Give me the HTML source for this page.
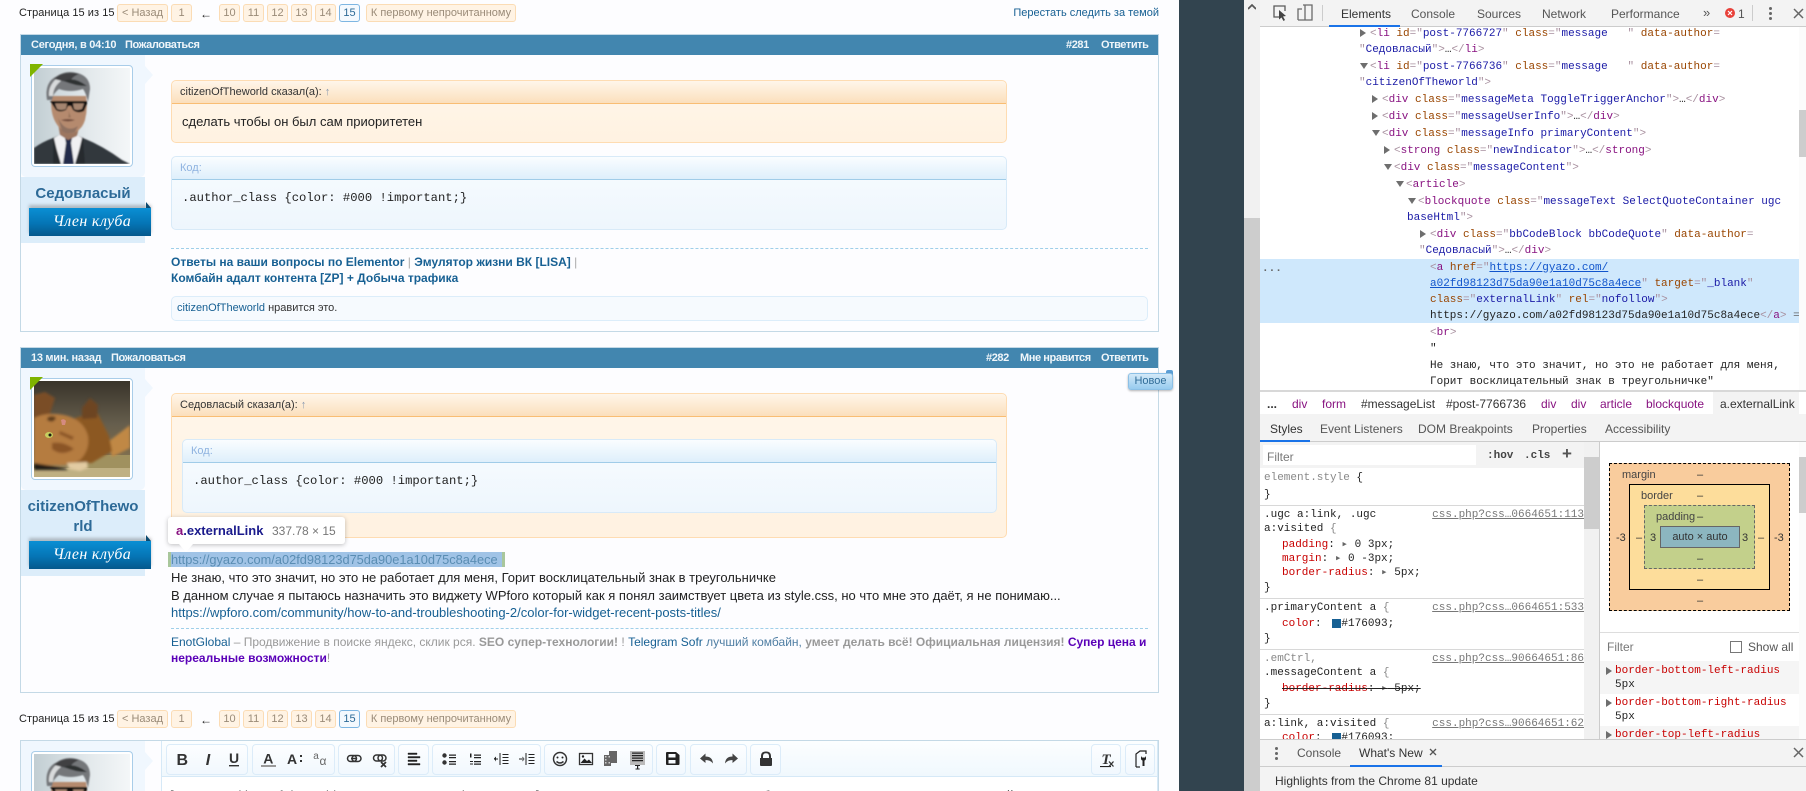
<!DOCTYPE html>
<html><head><meta charset="utf-8"><title>Forum</title>
<style>
html,body{margin:0;padding:0;width:1806px;height:791px;overflow:hidden;background:#fdfdff}
body{position:relative;font-family:"Liberation Sans","Noto Sans CJK SC",sans-serif;font-size:11px;color:#222}
#root{position:absolute;left:0;top:0;width:1806px;height:791px;overflow:hidden}
.a,.t{position:absolute}
.t{white-space:nowrap;line-height:16px}
.b{font-weight:bold}
.pb{position:absolute;top:4px;height:16px;border:1px solid #fbdcb5;border-radius:3px;background:#fff3e4;color:#9a8b78;font-size:11px;line-height:16px;text-align:center;box-sizing:content-box}
.post{position:absolute;left:20px;width:1137px;border:1px solid #c4d9e6;background:#fdfdff}
.head{position:absolute;left:0;right:0;top:0;height:20px;background:#4286af}
.head .t{color:#f0f6fa;font-weight:bold;top:2px;letter-spacing:-.42px}
.pan{position:absolute;left:21px;width:124px;background:#f0f7fe;border-radius:0 0 5px 5px}
.pan2{position:absolute;left:21px;width:124px;background:#dcedfa}
.arr{position:absolute;left:145px;width:0;height:0;border:9px solid transparent;border-left:8px solid #f0f7fe;border-right:0}
.av{position:absolute;left:31px;width:100px;height:100px;border:1px solid #a9cde9;border-radius:4px;background:#fff}
.av svg{position:absolute;left:2px;top:2px;width:96px;height:96px}
.gr{position:absolute;left:30px;width:0;height:0;border-top:13px solid #7fb400;border-right:13px solid transparent}
.name{position:absolute;left:21px;width:124px;text-align:center;font-size:15px;font-weight:bold;color:#2d6a97;line-height:20px}
.rib{position:absolute;left:29px;width:122px;height:28px;background:linear-gradient(#0a8fd4,#0575b5 55%,#05588c);color:#fff;font-family:"Liberation Serif",serif;font-style:italic;font-size:16px;letter-spacing:.3px;text-indent:4px;text-align:center;line-height:27px;box-shadow:0 -3px 3px rgba(90,90,90,.35)}
.rib:before{content:"";position:absolute;right:0;top:-6px;border-bottom:6px solid #0a4a70;border-right:5px solid transparent}
.q{position:absolute;left:171px;width:836px;border:1px solid #fedcb2;border-radius:5px;background:linear-gradient(#fff6ea,#fff2e1);box-sizing:border-box}
.qh{position:absolute;left:0;right:0;top:0;height:22px;background:linear-gradient(#fff6ea,#fbdfbc);border-bottom:1px solid #f9bd73;border-radius:5px 5px 0 0}
.c{position:absolute;border:1px solid #d8eaf8;border-radius:5px;background:linear-gradient(#f8fcfe,#eef6fd);box-sizing:border-box}
.ch{position:absolute;left:0;right:0;top:0;height:22px;background:linear-gradient(#fafdff,#deeffb);border-bottom:1px solid #a0cce8;border-radius:5px 5px 0 0}
.mono13{font-family:"Liberation Mono",monospace;font-size:12.2px;color:#222}
.dash{position:absolute;left:171px;width:977px;border-top:1px dashed #9fcfe9;height:0}
.m{font-size:12px;font-weight:bold;color:#176093}
.x{font-size:13px;color:#222}
.g{position:absolute;top:744px;height:29px;border:1px solid #dcecf9;border-radius:4px;background:linear-gradient(#fdfeff,#f1f8fe);box-sizing:content-box}
.ic{font-family:"Liberation Sans",sans-serif;fill:#333}
/* devtools */
#dv{position:absolute;left:1260px;top:0;width:546px;height:791px;background:#fff;overflow:hidden}
#dv .t{position:absolute}
.d{font-family:"Liberation Mono",monospace;font-size:11px;color:#222;white-space:pre !important;margin-top:1px}
.s{font-family:"Liberation Sans",sans-serif;font-size:12px;color:#555}
.tg{color:#881280}.br{color:#a8909f}.an{color:#994500}.av2{color:#1a1aa6}
.r{width:0;height:0;position:absolute;border-left:6px solid #6e6e6e;border-top:4px solid transparent;border-bottom:4px solid transparent}
.dn{width:0;height:0;position:absolute;border-top:6px solid #6e6e6e;border-left:4px solid transparent;border-right:4px solid transparent}
.sep{position:absolute;left:0;width:324px;height:1px;background:#d8d8d8}
.red{color:#c80000}.grn{color:#444}
.link{position:absolute;right:0;color:#777;text-decoration:underline}
</style></head>
<body>
<div id="root">

<!-- avatar art -->
<svg width="0" height="0" style="position:absolute">
  <defs>
    <linearGradient id="mbg" x1="0" x2="1" y1="0" y2="0"><stop offset="0" stop-color="#c2ced3"/><stop offset=".55" stop-color="#e2e8eb"/><stop offset="1" stop-color="#f4f7f8"/></linearGradient>
    <linearGradient id="cbg" x1="0" x2="0" y1="0" y2="1"><stop offset="0" stop-color="#39342a"/><stop offset=".45" stop-color="#665e4d"/><stop offset=".75" stop-color="#7c6c4e"/><stop offset="1" stop-color="#a89a6c"/></linearGradient>
    <filter id="bl"><feGaussianBlur stdDeviation=".9"/></filter>
    <filter id="bl2"><feGaussianBlur stdDeviation="1.200"/></filter>
    <g id="man">
      <rect width="96" height="96" fill="url(#mbg)"/>
      <g filter="url(#bl)">
        <path d="M0 96V80q8-6 19-10l8-4h14l8 4q20 8 39 22l8 4z" fill="#33373c"/>
        <path d="M20 70l10-6h9l9 6-6 26H26z" fill="#f0f0f2"/>
        <path d="M31 70h7l-1 5 3 21H29l3-21z" fill="#232b48"/>
        <path d="M19 69l8 27h-8zM49 69l-8 27h10z" fill="#26292e"/>
        <path d="M24 55l2 12 8 5 9-4 3-13z" fill="#9c7660"/>
        <path d="M18 28q-3 18 6 30 7 9 15 7 9-3 12-13 3-12 1-24z" fill="#b58a6e"/>
        <path d="M24 50q8 16 20 8l-3 6q-7 3-13-1z" fill="#8f7160"/>
        <path d="M13 32Q10 14 23 8q9-6 20-3 13 3 13 16l-2 13q-2-9-5-13-13 4-24 0-6 4-7 11z" fill="#74777a"/>
        <path d="M15 28q-1-10 8-18l4 3q-8 6-8 15z" fill="#d8dadb"/>
        <path d="M20 11Q30 2 45 6q-8 3-9 9-7-2-16-4z" fill="#3f4143"/>
        <path d="M30 13q10-5 23 5-12 0-23-5z" fill="#2f3133"/>
        <path d="M16 33h37v3l-3 7q-6 3-11-1l-2-4h-3l-2 4q-6 3-10 0z" fill="#0e0f10"/>
        <path d="M21 35.500h12l-1 5.500q-5 2-9 0zM39 35.500h11l-2 5.500q-5 2-8 0z" fill="#a58570"/>
        <path d="M27 52q7-2 14 0-7 3-14 0z" fill="#744f40"/>
        <path d="M33 40q3 6 1 9 2 1 3 0z" fill="#97735a"/>
      </g>
    </g>
    <g id="cat">
      <rect width="96" height="96" fill="url(#cbg)"/>
      <rect y="74" x="40" width="56" height="22" fill="#a0915f"/>
      <rect y="87" width="96" height="9" fill="#bfb083"/>
      <g filter="url(#bl2)">
        <path d="M74 61L96 44v23L78 76z" fill="#c08845"/>
        <path d="M41 37l22-6 12 24 3 15-20 12H40z" fill="#8c5823"/>
        <path d="M48 38V27l8-10 8 7-1 13z" fill="#6d4524"/>
        <path d="M0 14l11-3 10 6-7 22L0 46z" fill="#7a4e28"/>
        <path d="M0 37q14-7 34-2 16 5 20 20 2 14-8 24-10 6-24 5L0 84z" fill="#b57c40"/>
        <path d="M14 36q6-2 8 1-3 6-9 2z" fill="#5e3c1e"/>
        <path d="M18 62q12-2 22 6-12 8-22 0zM26 50l14 6-2 3-13-6z" fill="#8b5526"/>
        <path d="M0 82l30 5 5 2H0z" fill="#231b12"/>
        <path d="M33 82l20-1 1 6-8 3-11-2z" fill="#e2cba2"/>
      </g>
      <path d="M27 39q3-2 5 1l-1 4-3 0z" fill="#d58b80"/>
      <ellipse cx="15" cy="54" rx="4" ry="3" fill="#c6cf60"/>
      <circle cx="16" cy="54" r="1.500" fill="#1c1c10"/>
    </g>
  </defs>
</svg>

<!-- top pager -->
<div class="t" style="left:19px;top:5px;font-size:11px;color:#222;letter-spacing:.05px">Страница 15 из 15</div>
<div class="pb" style="left:117px;width:49px">&lt; Назад</div>
<div class="pb" style="left:171px;width:19px">1</div>
<div class="t" style="left:200px;top:6px;font-size:12px;color:#222">←</div>
<div class="pb" style="left:219px;width:19px">10</div>
<div class="pb" style="left:243px;width:19px">11</div>
<div class="pb" style="left:267px;width:19px">12</div>
<div class="pb" style="left:291px;width:19px">13</div>
<div class="pb" style="left:315px;width:19px">14</div>
<div class="pb" style="left:339px;width:19px;border-color:#7eb6e2;background:#f4f9fe;color:#2d6a97">15</div>
<div class="pb" style="left:366px;width:148px">К первому непрочитанному</div>
<div class="t" style="left:1009px;top:5px;width:150px;text-align:right;color:#176093;font-size:11px">Перестать следить за темой</div>

<!-- post 1 -->
<div class="post" style="top:34px;height:296px">
  <div class="head">
    <div class="t" style="left:10px;letter-spacing:-.25px">Сегодня, в 04:10</div>
    <div class="t" style="left:104px">Пожаловаться</div>
    <div class="t" style="left:1045px">#281</div>
    <div class="t" style="left:1080px">Ответить</div>
  </div>
</div>
<div class="pan" style="top:55px;height:122px"></div>
<div class="pan2" style="top:177px;height:66px"></div>
<div class="arr" style="top:66px"></div>
<div class="av" style="top:65px"><svg viewBox="0 0 96 96"><use href="#man"/></svg></div>
<div class="gr" style="top:64px"></div>
<div class="name" style="top:184px">Седовласый</div>
<div class="rib" style="top:208px">Член клуба</div>

<div class="q" style="top:80px;height:63px">
  <div class="qh"></div>
  <div class="t" style="left:8px;top:3px;color:#333;font-size:11px">citizenOfTheworld сказал(а): <span style="color:#8a9ab0">↑</span></div>
  <div class="t" style="left:10px;top:33px;font-size:13px;color:#222">сделать чтобы он был сам приоритетен</div>
</div>
<div class="c" style="left:171px;top:156px;width:836px;height:74px">
  <div class="ch"></div>
  <div class="t" style="left:8px;top:3px;color:#8fb3e0;font-size:11px">Код:</div>
  <div class="t mono13" style="left:10px;top:33px">.author_class {color: #000 !important;}</div>
</div>
<div class="dash" style="top:248px"></div>
<div class="t m" style="left:171px;top:254px">Ответы на ваши вопросы по Elementor <span style="color:#aaa;font-weight:normal">|</span> Эмулятор жизни ВК [LISA] <span style="color:#aaa;font-weight:normal">|</span></div>
<div class="t m" style="left:171px;top:270px">Комбайн адалт контента [ZP] + Добыча трафика</div>
<div class="a" style="left:171px;top:296px;width:977px;height:25px;box-sizing:border-box;background:#f6fafe;border:1px solid #dcedfa;border-radius:5px"></div>
<div class="t" style="left:177px;top:300px;font-size:11px;color:#333"><span style="color:#176093">citizenOfTheworld</span> нравится это.</div>

<!-- post 2 -->
<div class="post" style="top:347px;height:344px">
  <div class="head">
    <div class="t" style="left:10px;letter-spacing:-.3px">13 мин. назад</div>
    <div class="t" style="left:90px">Пожаловаться</div>
    <div class="t" style="left:965px">#282</div>
    <div class="t" style="left:999px">Мне нравится</div>
    <div class="t" style="left:1080px">Ответить</div>
  </div>
</div>
<div class="pan" style="top:368px;height:122px"></div>
<div class="pan2" style="top:490px;height:86px"></div>
<div class="arr" style="top:379px"></div>
<div class="av" style="top:378px"><svg viewBox="0 0 96 96"><use href="#cat"/></svg></div>
<div class="gr" style="top:377px"></div>
<div class="name" style="top:497px">citizenOfThewo<br>rld</div>
<div class="rib" style="top:541px">Член клуба</div>

<div class="q" style="top:393px;height:145px">
  <div class="qh"></div>
  <div class="t" style="left:8px;top:3px;color:#333;font-size:11px">Седовласый сказал(а): <span style="color:#8a9ab0">↑</span></div>
</div>
<div class="c" style="left:182px;top:439px;width:815px;height:74px">
  <div class="ch"></div>
  <div class="t" style="left:8px;top:3px;color:#8fb3e0;font-size:11px">Код:</div>
  <div class="t mono13" style="left:10px;top:33px">.author_class {color: #000 !important;}</div>
</div>

<div class="a" style="left:168px;top:552px;width:337px;height:15px;background:#a9c79c"></div>
<div class="a" style="left:171px;top:552px;width:331px;height:15px;background:#a0c3e6"></div>
<div class="t" style="left:171px;top:552px;font-size:12.8px;line-height:15px;color:#5a8db3">https://gyazo.com/a02fd98123d75da90e1a10d75c8a4ece</div>
<div class="t x" style="left:171px;top:570px">Не знаю, что это значит, но это не работает для меня, Горит восклицательный знак в треугольничке</div>
<div class="t x" style="left:171px;top:588px">В данном случае я пытаюсь назначить это виджету WPforo который как я понял заимствует цвета из style.css, но что мне это даёт, я не понимаю...</div>
<div class="t x" style="left:171px;top:605px;color:#176093">https://wpforo.com/community/how-to-and-troubleshooting-2/color-for-widget-recent-posts-titles/</div>
<div class="dash" style="top:628px"></div>
<div class="t" style="left:171px;top:634px;font-size:12px;color:#999"><span style="color:#176093">EnotGlobal</span> – Продвижение в поиске яндекс, склик рся. <b>SEO супер-технологии!</b> ! <span style="color:#176093">Telegram Sofr</span> <span style="color:#4f7ea3">лучший комбайн,</span> <b>умеет делать всё! Официальная лицензия!</b> <b style="color:#5a00b8">Супер цена и</b></div>
<div class="t" style="left:171px;top:650px;font-size:12px;color:#999"><b style="color:#5a00b8">нереальные возможности</b>!</div>

<!-- "Новое" badge -->
<div class="a" style="left:1166px;top:370px;width:7px;height:6px;background:#5c9fd6;border-radius:2px 2px 0 0"></div>
<div class="a" style="left:1128px;top:373px;width:45px;height:17px;box-sizing:border-box;background:linear-gradient(#d3e9f8,#97cbef);border:1px solid #8cc0e6;border-radius:3px;box-shadow:0 1px 2px rgba(0,0,0,.3);color:#2f6c98;text-align:center;font-size:11px;line-height:15px">Новое</div>

<!-- tooltip -->
<div class="a" style="left:168px;top:517px;width:177px;height:27px;background:#fff;border-radius:3px;box-shadow:0 1px 5px rgba(0,0,0,.25)"></div>
<div class="a" style="left:179px;top:544px;width:0;height:0;border-top:8px solid #fff;border-left:7px solid transparent;border-right:7px solid transparent"></div>
<div class="t" style="left:176px;top:523px;font-size:13px;font-weight:bold;color:#1a1a8c"><span style="color:#881280">a</span>.externalLink</div>
<div class="t" style="left:272px;top:523px;font-size:12px;color:#777">337.78 × 15</div>

<!-- bottom pager -->
<div class="t" style="left:19px;top:711px;font-size:11px;color:#222;letter-spacing:.05px">Страница 15 из 15</div>
<div class="pb" style="left:117px;top:710px;width:49px">&lt; Назад</div>
<div class="pb" style="left:171px;top:710px;width:19px">1</div>
<div class="t" style="left:200px;top:712px;font-size:12px;color:#222">←</div>
<div class="pb" style="left:219px;top:710px;width:19px">10</div>
<div class="pb" style="left:243px;top:710px;width:19px">11</div>
<div class="pb" style="left:267px;top:710px;width:19px">12</div>
<div class="pb" style="left:291px;top:710px;width:19px">13</div>
<div class="pb" style="left:315px;top:710px;width:19px">14</div>
<div class="pb" style="left:339px;top:710px;width:19px;border-color:#7eb6e2;background:#f4f9fe;color:#2d6a97">15</div>
<div class="pb" style="left:366px;top:710px;width:148px">К первому непрочитанному</div>

<!-- editor -->
<div class="a" style="left:20px;top:740px;width:1139px;height:51px;box-sizing:border-box;border:1px solid #c4d9e6;border-bottom:0;background:#fdfdff"></div>
<div class="pan" style="top:741px;height:50px;border-radius:0"></div>
<div class="arr" style="top:752px"></div>
<div class="av" style="top:751px;height:39px;border-bottom:0;border-radius:4px 4px 0 0;overflow:hidden"><svg viewBox="0 0 96 37" style="height:37px"><use href="#man"/></svg></div>
<div class="a" style="left:161px;top:741px;width:997px;height:36px;box-sizing:border-box;background:linear-gradient(#fcfeff,#f0f8fd);border-bottom:1px solid #d6e9f7;border-left:1px solid #d6e9f7;border-right:1px solid #d6e9f7"></div>
<div class="a" style="left:161px;top:777px;width:997px;height:14px;background:#fff;border-left:1px solid #d6e9f7;border-right:1px solid #d6e9f7;box-sizing:border-box"></div>
<div class="t" style="left:170px;top:788px;height:3px;width:980px;overflow:hidden;font-size:13px;color:#222">[QUOTE="citizenOfTheworld, post: 7766736, member: 278838"]Не знаю, что это значит, но это не работает для меня, Горит восклицательный знак в треугольничке</div>

<div class="g" style="left:166px;width:80px"></div>
<div class="g" style="left:252px;width:81px"></div>
<div class="g" style="left:338px;width:55px"></div>
<div class="g" style="left:398px;width:29px"></div>
<div class="g" style="left:432px;width:107px"></div>
<div class="g" style="left:544px;width:107px"></div>
<div class="g" style="left:656px;width:28px"></div>
<div class="g" style="left:690px;width:55px"></div>
<div class="g" style="left:750px;width:29px"></div>
<div class="g" style="left:1091px;width:28px"></div>
<div class="g" style="left:1125px;width:28px"></div>

<svg class="a" style="left:0;top:738px" width="1180" height="53" viewBox="0 738 1180 53">
  <g class="ic">
    <text x="182.3" y="765" text-anchor="middle" font-size="16" font-weight="bold">B</text>
    <text x="208" y="765" text-anchor="middle" font-size="16" font-weight="bold" font-style="italic">I</text>
    <text x="234" y="763" text-anchor="middle" font-size="14" font-weight="bold">U</text>
    <rect x="229" y="765" width="10" height="1.4"/>
    <text x="268.3" y="763.5" text-anchor="middle" font-size="14" font-weight="bold">A</text>
    <rect x="261" y="765" width="15" height="2" fill="#999"/>
    <text x="292" y="764" text-anchor="middle" font-size="14" font-weight="bold">A</text>
    <path d="M300 755h2v2h-2zM300 760h2v2h-2z"/>
    <text x="316" y="759" text-anchor="middle" font-size="10" fill="#666">a</text>
    <text x="323" y="765" text-anchor="middle" font-size="12" fill="#666">α</text>
  </g>
  <g fill="none" stroke="#333" stroke-width="1.5">
    <rect x="347.5" y="755.5" width="9" height="6" rx="3"/><rect x="352" y="755.5" width="9" height="6" rx="3"/>
    <path d="M351 758.5h6"/>
    <rect x="373.5" y="755" width="9" height="6" rx="3"/><rect x="378" y="755" width="8" height="6" rx="3"/>
    <path d="M381 762l5 5M386 762l-5 5" stroke-width="1.7"/>
    <circle cx="560" cy="759" r="6.5"/>
    <path d="M556.5 761.5q3.5 3 7 0"/>
    <rect x="579.5" y="753.5" width="13" height="11" stroke-width="1.3"/>
  </g>
  <g fill="#222">
    <path d="M408 753h9v1.5h-9zM408 756.5h12v1.5h-12zM408 760h9v1.5h-9zM408 763.5h12v1.5h-12z" stroke="#222" stroke-width=".4"/>
    <circle cx="444.5" cy="755.5" r="2.2" fill="#333"/><circle cx="444.5" cy="762.5" r="2.2" fill="#333"/>
    <path d="M449 754.5h7v1.3h-7zM449 757h7v1.3h-7zM449 761h7v1.3h-7zM449 763.5h7v1.3h-7z"/>
    <path d="M470 753.5h1.5v4H470zM474 754.5h7v1.3h-7zM474 757h7v1.3h-7zM470 761h3v1h-3v1.5h3v1h-3zM474 761h7v1.3h-7zM474 763.5h7v1.3h-7z"/>
    <path d="M499.5 753h1v12h-1zM502.5 754h6v1h-6zM502.5 757h6v1h-6zM502.5 760h6v1h-6zM502.5 763h6v1h-6zM494 758.5h4v1h-4zM494 758.5l2-2v5z"/>
    <path d="M525.500 753h1v12h-1zM528.500 754h6v1h-6zM528.500 757h6v1h-6zM528.500 760h6v1h-6zM528.500 763h6v1h-6zM519 758.500h4.500v1H519zM524.500 759l-2-2.500v5z"/>
    <circle cx="557.500" cy="757.500" r="1"/><circle cx="562.500" cy="757.500" r="1"/>
    <path d="M580.500 763l4-4.500 2.500 2.500 2-1.500 3 3.500z"/>
    <circle cx="583" cy="756.500" r="1.200"/>
    <path d="M604 755h7v11h-7zM609 751h8v12h-6v-8h-2z" fill="#666"/>
    <path d="M605 756h1.500v1.500H605zM605 759h1.500v1.500H605zM605 762h1.500v1.500H605zM608.500 756h1.500v1.500h-1.500zM608.500 762h1.500v1.500h-1.500z" fill="#ccc"/>
    <rect x="630" y="751" width="15" height="14" fill="#bbb"/>
    <path d="M632 752.500h11v1.200h-11zM632 755h11v1.200h-11zM632 757.500h11v1.200h-11zM632 760h11v1.200h-11zM635 765h5v1h-5zM637 765h1.200v4H637zM635.500 768.500h4.200v1h-4.200z"/>
    <path fill-rule="evenodd" d="M667 752h9l3.500 3v9q0 1-1 1h-11.500q-1 0-1-1v-11q0-1 1-1zM668.500 754v3.500h7V754zM668.500 760v3.500h7V760z"/>
    <path d="M700 758.500l5.500-5v3q7 0 7.500 7-2.500-3.500-7.500-3.500v3zM738 758.500l-5.500-5v3q-7 0-7.500 7 2.500-3.500 7.500-3.500v3z" fill="#444"/>
    <path fill-rule="evenodd" d="M761 758v-2q0-4.500 5-4.500t5 4.500v2h1v7q0 1-1 1h-10q-1 0-1-1v-7zM763 758h6v-2q0-2.800-3-2.800t-3 2.800z" fill="#333"/>
    <text x="1106" y="764" text-anchor="middle" font-size="15" font-weight="bold" font-style="italic" font-family="Liberation Serif" fill="#333">T</text>
    <rect x="1100" y="766" width="11" height="1.100"/>
    <path d="M1109 761.500l4.500 5M1113.500 761.500l-4.500 5" stroke="#333" stroke-width="1.300"/>
    <path d="M1136 767v-13l4-3h6v3" fill="none" stroke="#222" stroke-width="1.200"/>
    <path d="M1136 767h4" stroke="#222" stroke-width="1.200"/>
    <path d="M1141 756v2.500q0 1.500 1.500 2v5.500h2v-5.500q1.500-.5 1.500-2V756l-1 1.500h-3z"/>
  </g>
</svg>

<!-- dark strip + page scrollbar -->
<div class="a" style="left:1179px;top:0;width:65px;height:791px;background:#32444f"></div>
<div class="a" style="left:1244px;top:0;width:16px;height:791px;background:#f1f1f1"></div>
<div class="a" style="left:1244px;top:218px;width:16px;height:573px;background:#cdcdcd"></div>
<svg class="a" style="left:1248px;top:4px" width="8" height="6"><path d="M0 5l4-4 4 4" fill="none" stroke="#555" stroke-width="1.700"/></svg>

<!-- devtools -->
<div id="dv">
  <div class="a" style="left:0;top:0;width:546px;height:26px;background:#f3f3f3;border-bottom:1px solid #ccc"></div>
  <svg class="a" style="left:0;top:0" width="70" height="26">
    <path d="M19 17h-5v-11h11v5" fill="none" stroke="#5a5a5a" stroke-width="1.300"/>
    <path d="M19 10l7 6-3 .5 2 3.500-1.500 1-2-3.500-2.500 2z" fill="#444"/>
    <path d="M38 20v-11h4M43 5h9v15h-14M45 5v15" fill="none" stroke="#6a6a6a" stroke-width="1.300"/>
  </svg>
  <div class="a" style="left:62px;top:5px;width:1px;height:16px;background:#ccc"></div>
  <div class="t s" style="left:81px;top:6px;color:#333">Elements</div>
  <div class="a" style="left:69px;top:25px;width:71px;height:2px;background:#1a73e8"></div>
  <div class="t s" style="left:151px;top:6px">Console</div>
  <div class="t s" style="left:217px;top:6px">Sources</div>
  <div class="t s" style="left:282px;top:6px">Network</div>
  <div class="t s" style="left:351px;top:6px">Performance</div>
  <div class="t s" style="left:443px;top:5px;font-size:13px">»</div>
  <div class="a" style="left:465px;top:8px;width:10px;height:10px;border-radius:50%;background:#e8413a"></div>
  <svg class="a" style="left:465px;top:8px" width="10" height="10"><path d="M3 3l4 4M7 3l-4 4" stroke="#fff" stroke-width="1.200"/></svg>
  <div class="t s" style="left:478px;top:6px">1</div>
  <div class="a" style="left:492px;top:5px;width:1px;height:16px;background:#ccc"></div>
  <div class="a" style="left:509px;top:7px;width:3px;height:3px;background:#666;box-shadow:0 5px 0 #666,0 10px 0 #666;border-radius:50%"></div>
  <svg class="a" style="left:533px;top:8px" width="11" height="11"><path d="M1 1l9 9M10 1l-9 9" stroke="#666" stroke-width="1.500"/></svg>

  <!-- DOM tree -->
  <div class="a" style="left:0;top:259px;width:539px;height:64px;background:#cfe8fc"></div>
  <div class="t d" style="left:2px;top:260px;color:#666;font-weight:bold">...</div>
  <i class="r" style="left:100px;top:29px"></i>
  <div class="t d" style="left:110px;top:25px"><span class="br">&lt;</span><span class="tg">li</span> <span class="an">id</span><span class="br">="</span><span class="av2">post-7766727</span><span class="br">"</span> <span class="an">class</span><span class="br">="</span><span class="av2">message   </span><span class="br">"</span> <span class="an">data-author</span><span class="br">=</span></div>
  <div class="t d" style="left:99px;top:41px"><span class="br">"</span><span class="av2">Седовласый</span><span class="br">"&gt;</span>…<span class="br">&lt;/</span><span class="tg">li</span><span class="br">&gt;</span></div>
  <i class="dn" style="left:100px;top:63px"></i>
  <div class="t d" style="left:110px;top:58px"><span class="br">&lt;</span><span class="tg">li</span> <span class="an">id</span><span class="br">="</span><span class="av2">post-7766736</span><span class="br">"</span> <span class="an">class</span><span class="br">="</span><span class="av2">message   </span><span class="br">"</span> <span class="an">data-author</span><span class="br">=</span></div>
  <div class="t d" style="left:99px;top:74px"><span class="br">"</span><span class="av2">citizenOfTheworld</span><span class="br">"&gt;</span></div>
  <i class="r" style="left:112px;top:95px"></i>
  <div class="t d" style="left:122px;top:91px"><span class="br">&lt;</span><span class="tg">div</span> <span class="an">class</span><span class="br">="</span><span class="av2">messageMeta ToggleTriggerAnchor</span><span class="br">"&gt;</span>…<span class="br">&lt;/</span><span class="tg">div</span><span class="br">&gt;</span></div>
  <i class="r" style="left:112px;top:112px"></i>
  <div class="t d" style="left:122px;top:108px"><span class="br">&lt;</span><span class="tg">div</span> <span class="an">class</span><span class="br">="</span><span class="av2">messageUserInfo</span><span class="br">"&gt;</span>…<span class="br">&lt;/</span><span class="tg">div</span><span class="br">&gt;</span></div>
  <i class="dn" style="left:112px;top:130px"></i>
  <div class="t d" style="left:122px;top:125px"><span class="br">&lt;</span><span class="tg">div</span> <span class="an">class</span><span class="br">="</span><span class="av2">messageInfo primaryContent</span><span class="br">"&gt;</span></div>
  <i class="r" style="left:124px;top:146px"></i>
  <div class="t d" style="left:134px;top:142px"><span class="br">&lt;</span><span class="tg">strong</span> <span class="an">class</span><span class="br">="</span><span class="av2">newIndicator</span><span class="br">"&gt;</span>…<span class="br">&lt;/</span><span class="tg">strong</span><span class="br">&gt;</span></div>
  <i class="dn" style="left:124px;top:164px"></i>
  <div class="t d" style="left:134px;top:159px"><span class="br">&lt;</span><span class="tg">div</span> <span class="an">class</span><span class="br">="</span><span class="av2">messageContent</span><span class="br">"&gt;</span></div>
  <i class="dn" style="left:136px;top:181px"></i>
  <div class="t d" style="left:146px;top:176px"><span class="br">&lt;</span><span class="tg">article</span><span class="br">&gt;</span></div>
  <i class="dn" style="left:148px;top:198px"></i>
  <div class="t d" style="left:158px;top:193px"><span class="br">&lt;</span><span class="tg">blockquote</span> <span class="an">class</span><span class="br">="</span><span class="av2">messageText SelectQuoteContainer ugc</span></div>
  <div class="t d" style="left:147px;top:209px"><span class="av2">baseHtml</span><span class="br">"&gt;</span></div>
  <i class="r" style="left:160px;top:230px"></i>
  <div class="t d" style="left:170px;top:226px"><span class="br">&lt;</span><span class="tg">div</span> <span class="an">class</span><span class="br">="</span><span class="av2">bbCodeBlock bbCodeQuote</span><span class="br">"</span> <span class="an">data-author</span><span class="br">=</span></div>
  <div class="t d" style="left:159px;top:242px"><span class="br">"</span><span class="av2">Седовласый</span><span class="br">"&gt;</span>…<span class="br">&lt;/</span><span class="tg">div</span><span class="br">&gt;</span></div>
  <div class="t d" style="left:170px;top:259px"><span class="br">&lt;</span><span class="tg">a</span> <span class="an">href</span><span class="br">="</span><span style="color:#1155cc;text-decoration:underline">https://gyazo.com/</span></div>
  <div class="t d" style="left:170px;top:275px"><span style="color:#1155cc;text-decoration:underline">a02fd98123d75da90e1a10d75c8a4ece</span><span class="br">"</span> <span class="an">target</span><span class="br">="</span><span class="av2">_blank</span><span class="br">"</span></div>
  <div class="t d" style="left:170px;top:291px"><span class="an">class</span><span class="br">="</span><span class="av2">externalLink</span><span class="br">"</span> <span class="an">rel</span><span class="br">="</span><span class="av2">nofollow</span><span class="br">"&gt;</span></div>
  <div class="t d" style="left:170px;top:307px">https://gyazo.com/a02fd98123d75da90e1a10d75c8a4ece<span class="br">&lt;/</span><span class="tg">a</span><span class="br">&gt;</span> <span style="color:#666">=</span></div>
  <div class="t d" style="left:170px;top:324px"><span class="br">&lt;</span><span class="tg">br</span><span class="br">&gt;</span></div>
  <div class="t d" style="left:170px;top:340px">"</div>
  <div class="t d" style="left:170px;top:357px">Не знаю, что это значит, но это не работает для меня,</div>
  <div class="t d" style="left:170px;top:373px">Горит восклицательный знак в треугольничке"</div>
  <div class="a" style="left:539px;top:27px;width:7px;height:363px;background:#fbfbfb"></div>
  <div class="a" style="left:539px;top:110px;width:7px;height:47px;background:#cdcdcd"></div>

  <!-- breadcrumbs -->
  <div class="a" style="left:0;top:390px;width:546px;height:2px;background:#d8d8d8"></div>
  <div class="t s b" style="left:7px;top:396px;color:#333">...</div>
  <div class="t s" style="left:32px;top:396px;color:#881280">div</div>
  <div class="t s" style="left:62px;top:396px;color:#881280">form</div>
  <div class="t s" style="left:101px;top:396px;color:#333">#messageList</div>
  <div class="t s" style="left:186px;top:396px;color:#333">#post-7766736</div>
  <div class="t s" style="left:281px;top:396px;color:#881280">div</div>
  <div class="t s" style="left:311px;top:396px;color:#881280">div</div>
  <div class="t s" style="left:340px;top:396px;color:#881280">article</div>
  <div class="t s" style="left:386px;top:396px;color:#881280">blockquote</div>
  <div class="a" style="left:453px;top:392px;width:86px;height:22px;background:#f3f3f3"></div>
  <div class="t s" style="left:460px;top:396px;color:#333">a.externalLink</div>

  <!-- sub tabs -->
  <div class="a" style="left:0;top:414px;width:546px;height:28px;background:#f3f3f3;border-bottom:1px solid #ccc;box-sizing:border-box"></div>
  <div class="t s" style="left:10px;top:421px;color:#333">Styles</div>
  <div class="a" style="left:0;top:440px;width:50px;height:2px;background:#1a73e8"></div>
  <div class="t s" style="left:60px;top:421px">Event Listeners</div>
  <div class="t s" style="left:158px;top:421px">DOM Breakpoints</div>
  <div class="t s" style="left:272px;top:421px">Properties</div>
  <div class="t s" style="left:345px;top:421px">Accessibility</div>

  <!-- styles pane -->
  <div class="a" style="left:0;top:442px;width:324px;height:26px;background:#f3f3f3"></div>
  <div class="a" style="left:3px;top:445px;width:213px;height:20px;background:#fff"></div>
  <div class="t s" style="left:7px;top:449px;color:#777">Filter</div>
  <div class="t d" style="left:227px;top:447px;font-weight:bold;color:#444">:hov</div>
  <div class="t d" style="left:264px;top:447px;font-weight:bold;color:#444">.cls</div>
  <div class="t s" style="left:302px;top:446px;font-size:17px;font-weight:bold;color:#555">+</div>
  <div class="a" style="left:324px;top:442px;width:15px;height:297px;background:#f1f1f1"></div>
  <div class="a" style="left:324px;top:457px;width:15px;height:72px;background:#cdcdcd"></div>
  <div class="a" style="left:339px;top:442px;width:1px;height:297px;background:#ccc"></div>

  <div class="t d" style="left:4px;top:469px;color:#888">element.style <span style="color:#222">{</span></div>
  <div class="t d" style="left:4px;top:486px">}</div>
  <div class="sep" style="top:505px"></div>
  <div class="t d" style="left:4px;top:506px">.ugc a:link, .ugc</div>
  <div class="t d" style="left:4px;top:520px">a:visited <span style="color:#888">{</span></div>
  <div class="t d link" style="right:222px;top:506px">css.php?css…0664651:113</div>
  <div class="t d" style="left:22px;top:536px"><span class="red">padding</span>: <span style="color:#666">▸</span> 0 3px;</div>
  <div class="t d" style="left:22px;top:550px"><span class="red">margin</span>: <span style="color:#666">▸</span> 0 -3px;</div>
  <div class="t d" style="left:22px;top:564px"><span class="red">border-radius</span>: <span style="color:#666">▸</span> 5px;</div>
  <div class="t d" style="left:4px;top:579px">}</div>
  <div class="sep" style="top:598px"></div>
  <div class="t d" style="left:4px;top:599px">.primaryContent a <span style="color:#888">{</span></div>
  <div class="t d link" style="right:222px;top:599px">css.php?css…0664651:533</div>
  <div class="t d" style="left:22px;top:615px"><span class="red">color</span>: <span class="a" style="left:50px;top:3px;width:9px;height:9px;background:#176093"></span>&nbsp;&nbsp;#176093;</div>
  <div class="t d" style="left:4px;top:630px">}</div>
  <div class="sep" style="top:649px"></div>
  <div class="t d" style="left:4px;top:650px;color:#888">.emCtrl,</div>
  <div class="t d" style="left:4px;top:664px">.messageContent a <span style="color:#888">{</span></div>
  <div class="t d link" style="right:222px;top:650px">css.php?css…90664651:86</div>
  <div class="t d" style="left:22px;top:680px;text-decoration:line-through"><span class="red">border-radius</span>: <span style="color:#666">▸</span> 5px;</div>
  <div class="t d" style="left:4px;top:695px">}</div>
  <div class="sep" style="top:714px"></div>
  <div class="t d" style="left:4px;top:715px">a:link, a:visited <span style="color:#888">{</span></div>
  <div class="t d link" style="right:222px;top:715px">css.php?css…90664651:62</div>
  <div class="a" style="left:0;top:732px;width:324px;height:7px;overflow:hidden">
    <div class="t d" style="left:22px;top:-3px"><span class="red">color</span>: <span class="a" style="left:50px;top:3px;width:9px;height:9px;background:#176093"></span>&nbsp;&nbsp;#176093;</div>
  </div>

  <!-- box model -->
  <div class="a" style="left:349px;top:463px;width:181px;height:148px;box-sizing:border-box;background:#f9cc9d;border:1px dashed #000"></div>
  <div class="a" style="left:369px;top:484px;width:141px;height:106px;box-sizing:border-box;background:#fddd9b;border:1px solid #000"></div>
  <div class="a" style="left:384px;top:505px;width:111px;height:64px;box-sizing:border-box;background:#c3d08b;border:1px dashed #666"></div>
  <div class="a" style="left:400px;top:526px;width:80px;height:22px;box-sizing:border-box;background:#8cb6c0;border:1px solid #666"></div>
  <div class="t s" style="left:362px;top:467px;font-size:11px;color:#444">margin</div>
  <div class="t s" style="left:381px;top:488px;font-size:11px;color:#444">border</div>
  <div class="t s" style="left:396px;top:509px;font-size:11px;color:#444">padding</div>
  <div class="t s" style="left:405px;top:529px;width:70px;text-align:center;font-size:11px;color:#333">auto × auto</div>
  <div class="t s" style="left:437px;top:467px;font-size:11px;color:#333">–</div>
  <div class="t s" style="left:437px;top:488px;font-size:11px;color:#333">–</div>
  <div class="t s" style="left:437px;top:509px;font-size:11px;color:#333">–</div>
  <div class="t s" style="left:437px;top:551px;font-size:11px;color:#333">–</div>
  <div class="t s" style="left:437px;top:572px;font-size:11px;color:#333">–</div>
  <div class="t s" style="left:437px;top:593px;font-size:11px;color:#333">–</div>
  <div class="t s" style="left:356px;top:530px;font-size:11px;color:#333">-3</div>
  <div class="t s" style="left:376px;top:530px;font-size:11px;color:#333">–</div>
  <div class="t s" style="left:390px;top:530px;font-size:11px;color:#333">3</div>
  <div class="t s" style="left:482px;top:530px;font-size:11px;color:#333">3</div>
  <div class="t s" style="left:498px;top:530px;font-size:11px;color:#333">–</div>
  <div class="t s" style="left:514px;top:530px;font-size:11px;color:#333">-3</div>
  <div class="a" style="left:340px;top:632px;width:199px;height:1px;background:#ddd"></div>
  <div class="t s" style="left:347px;top:639px;color:#777">Filter</div>
  <div class="a" style="left:470px;top:641px;width:12px;height:12px;box-sizing:border-box;border:1px solid #777;background:#fff"></div>
  <div class="t s" style="left:488px;top:639px">Show all</div>
  <div class="a" style="left:340px;top:661px;width:199px;height:33px;background:#f5f5f5"></div>
  <div class="a" style="left:340px;top:726px;width:199px;height:13px;background:#f5f5f5"></div>
  <i class="r" style="left:346px;top:667px"></i>
  <div class="t d red" style="left:355px;top:662px">border-bottom-left-radius</div>
  <div class="t d" style="left:355px;top:676px">5px</div>
  <i class="r" style="left:346px;top:699px"></i>
  <div class="t d red" style="left:355px;top:694px">border-bottom-right-radius</div>
  <div class="t d" style="left:355px;top:708px">5px</div>
  <i class="r" style="left:346px;top:731px"></i>
  <div class="a" style="left:355px;top:727px;width:180px;height:12px;overflow:hidden"><div class="t d red" style="left:0;top:-1px">border-top-left-radius</div></div>
  <div class="a" style="left:539px;top:442px;width:7px;height:297px;background:#fbfbfb"></div>
  <div class="a" style="left:539px;top:457px;width:7px;height:56px;background:#cdcdcd"></div>

  <!-- drawer -->
  <div class="a" style="left:0;top:739px;width:546px;height:52px;background:#f3f3f3;border-top:1px solid #ccc;box-sizing:border-box"></div>
  <div class="a" style="left:0;top:766px;width:546px;height:1px;background:#ccc"></div>
  <div class="a" style="left:15px;top:747px;width:3px;height:3px;background:#666;box-shadow:0 5px 0 #666,0 10px 0 #666;border-radius:50%"></div>
  <div class="t s" style="left:37px;top:745px">Console</div>
  <div class="t s" style="left:99px;top:745px;color:#333">What's New</div>
  <svg class="a" style="left:169px;top:748px" width="8" height="8"><path d="M1 1l6 6M7 1l-6 6" stroke="#555" stroke-width="1.300"/></svg>
  <div class="a" style="left:90px;top:765px;width:92px;height:2px;background:#1a73e8"></div>
  <svg class="a" style="left:533px;top:747px" width="11" height="11"><path d="M1 1l9 9M10 1l-9 9" stroke="#666" stroke-width="1.500"/></svg>
  <div class="t s" style="left:15px;top:773px;height:16px;color:#333">Highlights from the Chrome 81 update</div>
</div>
</div>
</body></html>
